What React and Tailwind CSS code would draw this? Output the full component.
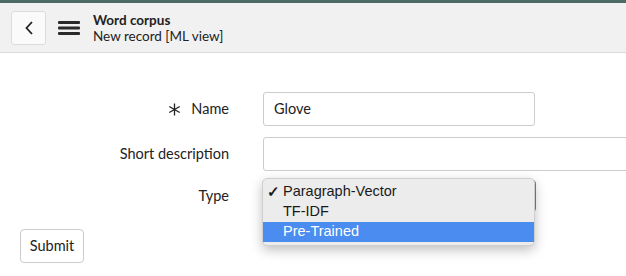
import React from "react";

const font = { fontFamily: "Lato, 'Open Sans', sans-serif" };

const Header = () => (
  <div className="border-t-[3px] border-[#4d6b64] bg-[#f1f1f1] border-b border-b-[#d9d9d9] h-[53px] flex items-center px-[11px]">
    <button className="w-[35px] h-[34px] bg-[#fafafa] border border-[#dcdcdc] rounded-[3px] flex items-center justify-center">
      <svg width="10" height="16" viewBox="0 0 10 16">
        <path d="M8 2 L2.5 8 L8 14" fill="none" stroke="#222" strokeWidth="1.8" />
      </svg>
    </button>
    <svg className="ml-[12px]" width="22" height="14" viewBox="0 0 22 14">
      <rect x="0" y="0" width="22" height="3" rx="1" fill="#2a2a2a" />
      <rect x="0" y="5.5" width="22" height="3" rx="1" fill="#2a2a2a" />
      <rect x="0" y="11" width="22" height="3" rx="1" fill="#2a2a2a" />
    </svg>
    <div className="ml-[13px] leading-[16px] text-[#222] text-[13.5px]">
      <div className="font-bold">Word corpus</div>
      <div>New record [ML view]</div>
    </div>
  </div>
);

const Row = ({ label, required, children, className }) => (
  <div className={"flex items-center " + (className || "")}>
    <div className="w-[229px] shrink-0 flex justify-end items-center text-[14.5px] text-[#222]">
      {required && (
        <svg className="mr-[10px]" width="13" height="13" viewBox="0 0 13 13">
          <path d="M6.5 0.5 V12.5 M1.3 3.5 L11.7 9.5 M11.7 3.5 L1.3 9.5" stroke="#222" strokeWidth="1.3" />
        </svg>
      )}
      {label}
    </div>
    <div className="ml-[34px] flex-1 min-w-0">{children}</div>
  </div>
);

const Dropdown = () => (
  <div className="relative h-[34px] z-10">
    <div className="absolute left-0 top-[1px] w-[273px] h-[32px] rounded-[4px] border-2 border-[#5e8e83]" />
    <div
      className="absolute left-[-1px] top-[-1px] w-[273px] bg-[#ececec] rounded-[5px] py-[3px] border border-[#cfcfcf] shadow-[0_4px_12px_rgba(0,0,0,0.25)] text-[14.5px] text-[#1a1a1a]"
      style={{ fontFamily: "'Liberation Sans', Arial, sans-serif" }}
    >
      <div className="h-[20px] flex items-center">
        <span className="w-[20px] text-right pr-[3px] text-[15px] font-bold">✓</span>
        <span>Paragraph-Vector</span>
      </div>
      <div className="h-[20px] flex items-center pl-[20px]">TF-IDF</div>
      <div className="h-[20px] flex items-center pl-[20px] bg-[#4a8cf0] text-white">Pre-Trained</div>
    </div>
  </div>
);

export default function App() {
  return (
    <div className="w-[626px] h-[276px] bg-white overflow-hidden" style={font}>
      <Header />
      <div className="pt-[39px]">
        <Row label="Name" required>
          <div className="w-[272px] h-[34px] border border-[#cccccc] rounded-[3px] flex items-center px-[10px] text-[14.5px] text-[#222]">
            Glove
          </div>
        </Row>
        <Row label="Short description" className="mt-[11px]">
          <div className="w-[400px] h-[34px] border border-[#cccccc] rounded-[3px]" />
        </Row>
        <Row label="Type" className="mt-[8px]">
          <Dropdown />
        </Row>
        <div className="mt-[16px] pl-[20px]">
          <button className="w-[64px] h-[34px] border border-[#cccccc] rounded-[4px] bg-white text-[14.5px] text-[#222]">
            Submit
          </button>
        </div>
      </div>
    </div>
  );
}
